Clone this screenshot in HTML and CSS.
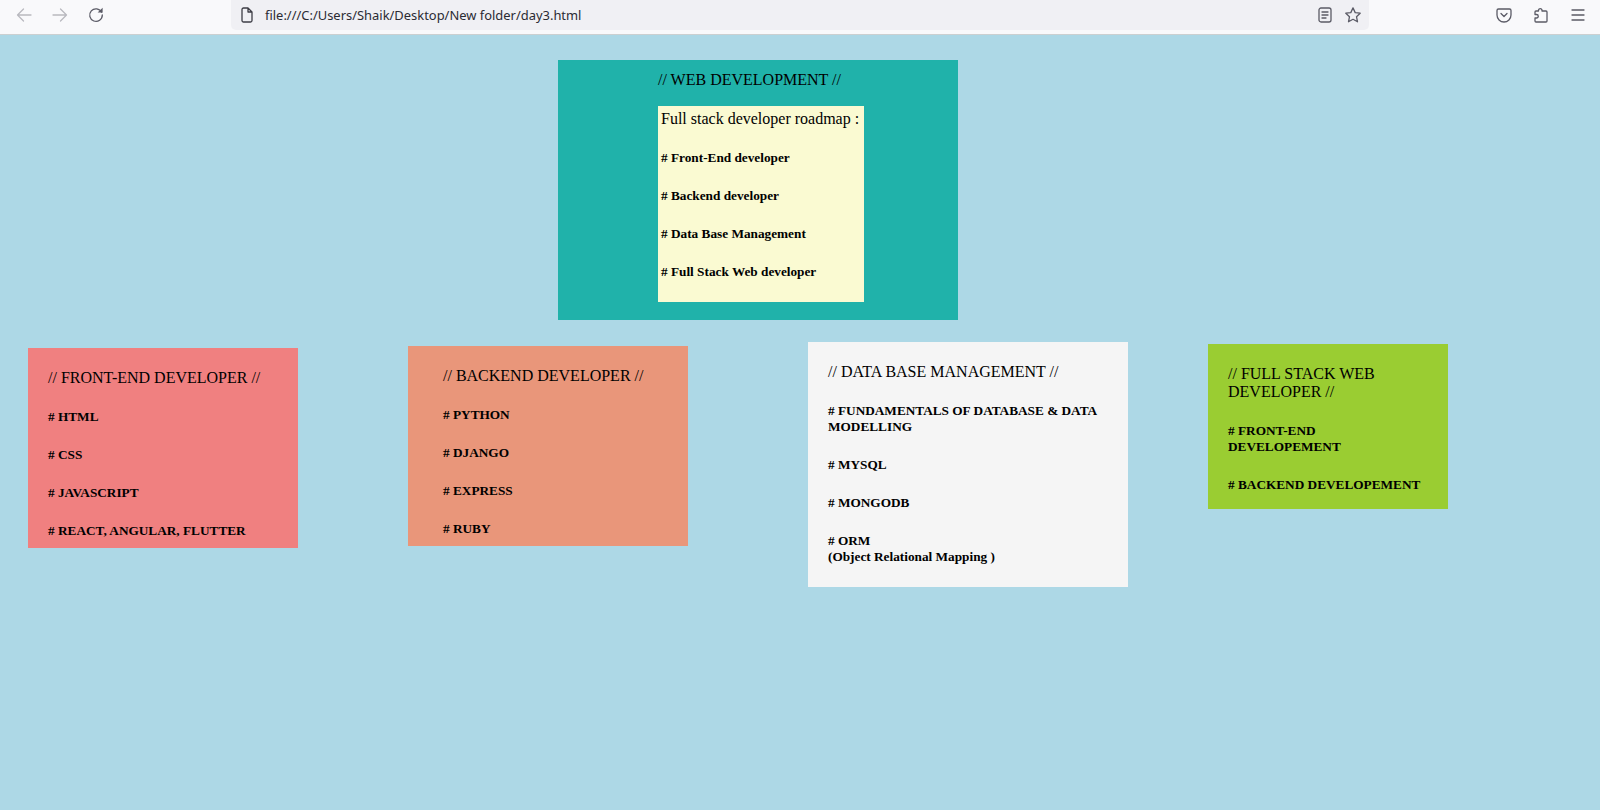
FILE: index.html
```html
<!DOCTYPE html>
<html lang="en">
<head>
<meta charset="utf-8">
<title>day3</title>
<link rel="stylesheet" href="styles.css">
</head>
<body>
<header class="toolbar">
  <div class="nav">
    <svg class="icon faint" viewBox="0 0 16 16"><path d="M15 8H1.500M7.500 2 1.500 8l6 6"/></svg>
    <svg class="icon faint" viewBox="0 0 16 16"><path d="M1 8h13.500M8.500 2l6 6-6 6"/></svg>
    <svg class="icon" viewBox="0 0 16 16"><path d="M13.600 5.200A6.300 6.300 0 1 0 14.300 8"/><path class="solid" d="M9.600 5.600 14.600 5.600 14.600 .8z"/></svg>
  </div>
  <div class="urlbar">
    <svg class="icon doc" viewBox="0 0 16 16"><path d="M3 2.500A1.500 1.500 0 0 1 4.500 1H9l4 4v8.500a1.500 1.500 0 0 1-1.500 1.500h-7A1.500 1.500 0 0 1 3 13.500zM9 1v4h4"/></svg>
    <span class="url">file:///C:/Users/Shaik/Desktop/New folder/day3.html</span>
    <div class="url-actions">
      <svg class="icon" viewBox="0 0 16 16"><rect x="2" y="1" width="12" height="14" rx="2"/><path d="M5 5h6M5 8h6M5 11h4"/></svg>
      <svg class="icon star" viewBox="0 0 16 16"><path d="M8 .9l2.200 4.700 5 .6-3.700 3.500 1 5.100L8 12.300l-4.500 2.500 1-5.100L.8 6.200l5-.6z"/></svg>
    </div>
  </div>
  <div class="tools">
    <svg class="icon" viewBox="0 0 16 16"><path d="M2.500 2h11A1.500 1.500 0 0 1 15 3.500V8a7 7 0 0 1-14 0V3.500A1.500 1.500 0 0 1 2.500 2zM5 6.500l3 3 3-3"/></svg>
    <svg class="icon" viewBox="0 0 16 16"><path d="M9 4h4a1 1 0 0 1 1 1v9a1 1 0 0 1-1 1H3a1 1 0 0 1-1-1v-3h1.500a1.600 1.600 0 0 0 0-3.500H2V5a1 1 0 0 1 1-1h2.500V3a1.800 1.800 0 0 1 3.500 0z"/></svg>
    <svg class="icon" viewBox="0 0 16 16"><path d="M2 3h12M2 8h12M2 13h12"/></svg>
  </div>
</header>
<main class="page">
  <section class="hero">
    <h3>// WEB DEVELOPMENT //</h3>
    <div class="roadmap">
      <p>Full stack developer roadmap :</p>
      <h5># Front-End developer</h5>
      <h5># Backend developer</h5>
      <h5># Data Base Management</h5>
      <h5># Full Stack Web developer</h5>
    </div>
  </section>
  <section class="cards">
    <article class="card front">
      <h3>// FRONT-END DEVELOPER //</h3>
      <h5># HTML</h5>
      <h5># CSS</h5>
      <h5># JAVASCRIPT</h5>
      <h5># REACT, ANGULAR, FLUTTER</h5>
    </article>
    <article class="card back">
      <h3>// BACKEND DEVELOPER //</h3>
      <h5># PYTHON</h5>
      <h5># DJANGO</h5>
      <h5># EXPRESS</h5>
      <h5># RUBY</h5>
    </article>
    <article class="card data">
      <h3>// DATA BASE MANAGEMENT //</h3>
      <h5># FUNDAMENTALS OF DATABASE &amp; DATA MODELLING</h5>
      <h5># MYSQL</h5>
      <h5># MONGODB</h5>
      <h5># ORM<br>(Object Relational Mapping )</h5>
    </article>
    <article class="card full">
      <h3>// FULL STACK WEB DEVELOPER //</h3>
      <h5># FRONT-END DEVELOPEMENT</h5>
      <h5># BACKEND DEVELOPEMENT</h5>
    </article>
  </section>
</main>
</body>
</html>
```
FILE: styles.css
```css
* { box-sizing: border-box; }
html, body { margin: 0; height: 100%; overflow: hidden; }
body {
  background: #add8e6;
  color: #000;
  font-family: "Liberation Serif", "Times New Roman", serif;
  font-size: 16px;
}
h3, p { margin: 0; font-size: 16px; font-weight: 400; line-height: 18.400px; }
h5 { margin: 22px 0; font-size: 13.280px; font-weight: 700; line-height: 16px; }
h5:last-child { margin-bottom: 0; }

.toolbar {
  display: flex;
  height: 35px;
  background: #f9f9fb;
  border-bottom: 1px solid #ccd0d1;
}
.icon {
  width: 16px;
  height: 16px;
  flex: none;
  fill: none;
  stroke: #5b5b66;
  stroke-width: 1.300;
  stroke-linejoin: round;
  stroke-linecap: round;
}
.icon .solid { fill: #5b5b66; stroke: none; }
.icon.faint { stroke: #b9b9bf; }
.nav {
  display: flex;
  align-items: center;
  gap: 20px;
  width: 231px;
  padding: 0 0 4px 16px;
}
.urlbar {
  display: flex;
  align-items: center;
  width: 1138px;
  height: 30px;
  padding: 0 8px 0 8px;
  background: #f0f0f4;
  border-radius: 0 0 5px 5px;
}
.doc { stroke: #3d3d45; }
.url {
  margin-left: 10px;
  font-family: "Noto Sans", sans-serif;
  font-size: 12.930px;
  color: #2b2b33;
  white-space: nowrap;
}
.url-actions {
  display: flex;
  gap: 12px;
  margin-left: auto;
}
.tools {
  display: flex;
  align-items: center;
  gap: 21px;
  padding: 0 0 4px 127px;
}

.page { padding: 25px 8px 0; }
.hero {
  width: 400px;
  height: 260px;
  margin-left: 550px;
  padding: 11px 0 0 100px;
  background: #20b2aa;
}
.roadmap {
  width: 206px;
  height: 196px;
  margin-top: 16.600px;
  padding: 4px 0 0 3px;
  background: #fafad2;
}
.cards {
  display: grid;
  grid-template-columns: repeat(4, 400px);
  align-items: start;
  margin-top: 22px;
}
.card { padding: 21px 20px 0; }
.front { width: 270px; height: 200px; margin: 6px 0 0 20px; background: #f08080; }
.back { width: 280px; height: 200px; margin-top: 4px; padding-left: 35px; background: #e9967a; }
.data { width: 320px; height: 245px; background: #f5f5f5; }
.full { width: 240px; height: 165px; margin-top: 2px; background: #9acd32; }
.full h3 { margin-bottom: -1px; }
```
